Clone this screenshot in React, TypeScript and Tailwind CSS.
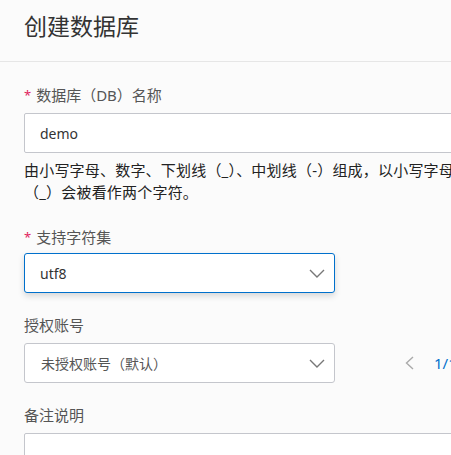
const font = { fontFamily: '"Noto Sans", "Noto Sans CJK SC", sans-serif' };

function Label({ text, required }: { text: string; required?: boolean }) {
  return (
    <div className="h-5 flex items-center text-[15px] leading-5 text-[#555]">
      {required && <span className="text-[#e0245e] mr-[5px] text-[13px]">*</span>}
      <span>{text}</span>
    </div>
  );
}

function Caret() {
  return (
    <svg width="16" height="9" viewBox="0 0 16 9" fill="none">
      <polyline points="1,1 8,8 15,1" stroke="#777" strokeWidth="1.4" />
    </svg>
  );
}

export default function App() {
  return (
    <div
      className="w-[451px] h-[455px] overflow-hidden bg-[#fbfbfb] text-[#333]"
      style={font}
    >
      <div className="h-[62px] border-b border-[#e6e6e6] px-6 pt-[10px]">
        <h1 className="text-[23px] leading-8 text-[#333]">创建数据库</h1>
      </div>

      <div className="w-[900px] px-6 pt-[23px]">
        <Label text="数据库（DB）名称" required />
        <div className="mt-2 h-10 w-[700px] border border-[#c4c6cc] bg-white rounded-[2px] flex items-center pl-[15px] text-[14px] text-[#333]">
          demo
        </div>
        <div className="mt-[6px] text-[15px] leading-[22px] tracking-[0.2px] text-[#222] whitespace-nowrap">
          <div>由小写字母、数字、下划线（_）、中划线（-）组成，以小写字母开头，小写字母或数字结尾，最多64个字符。下划线</div>
          <div>（_）会被看作两个字符。</div>
        </div>

        <div className="mt-6">
          <Label text="支持字符集" required />
          <div className="mt-[6px] h-10 w-[311px] border border-[#0070cc] bg-white rounded-[3px] shadow-[0_3px_6px_rgba(0,0,0,0.15)] flex items-center justify-between pl-[15px] pr-[9px] text-[14px] text-[#333]">
            <span>utf8</span>
            <Caret />
          </div>
        </div>

        <div className="mt-[22px]">
          <Label text="授权账号" />
          <div className="mt-2 flex items-center">
            <div className="h-10 w-[311px] border border-[#c4c6cc] bg-white rounded-[3px] flex items-center justify-between pl-[16px] pr-[9px] text-[14px] text-[#555]">
              <span>未授权账号（默认）</span>
              <Caret />
            </div>
            <div className="ml-[70px] flex items-center gap-[20px]">
              <svg width="9" height="14" viewBox="0 0 9 14" fill="none">
                <polyline points="8,1 1.5,7 8,13" stroke="#aaa" strokeWidth="1.4" />
              </svg>
              <span className="text-[15px] text-[#0070cc]">1/1</span>
            </div>
          </div>
        </div>

        <div className="mt-[22px]">
          <Label text="备注说明" />
          <div className="mt-2 h-20 w-[700px] border border-[#c4c6cc] bg-white rounded-[2px]" />
        </div>
      </div>
    </div>
  );
}
